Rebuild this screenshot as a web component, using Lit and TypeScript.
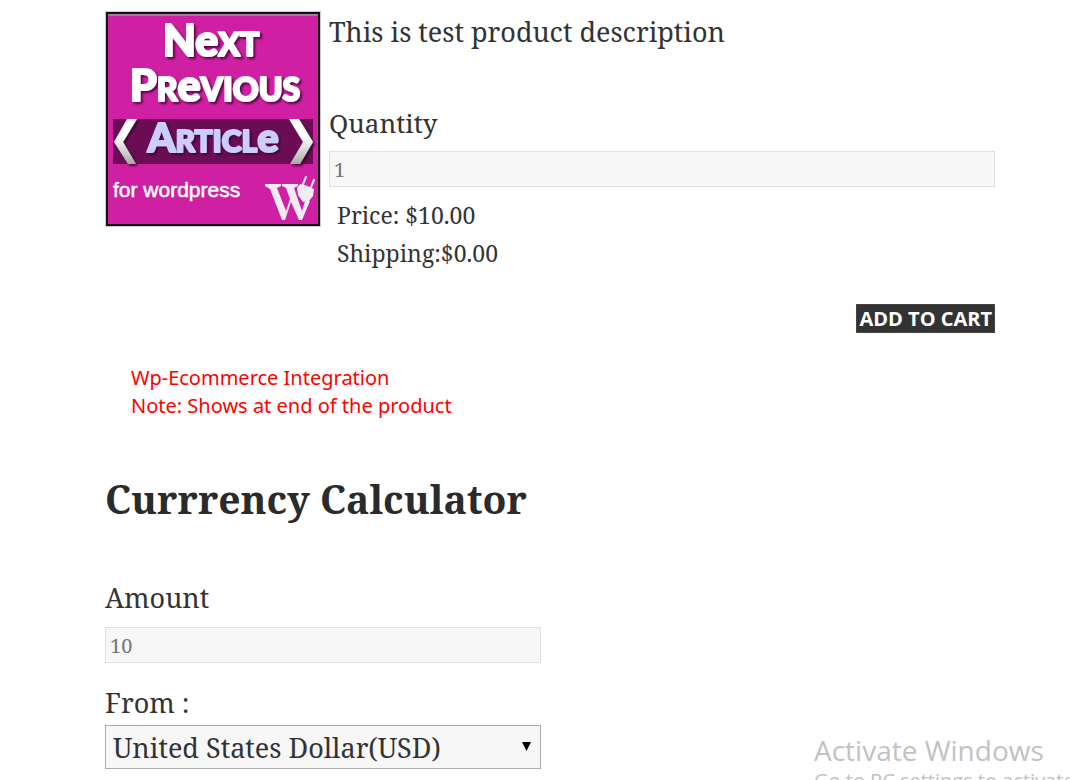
import { LitElement, html, css, svg } from "lit";
import { customElement, state } from "lit/decorators.js";

@customElement("product-badge")
class ProductBadge extends LitElement {
  static styles = css`
    :host { display: block; width: 216px; flex: none; }
    svg { display: block; width: 100%; }
    .word { font-family: Lato, sans-serif; font-weight: 900; stroke-width: 2; stroke-linejoin: round; }
    .tag { font-family: "Liberation Sans", sans-serif; font-size: 21px; fill: #fff; stroke: #fff; stroke-width: 0.5; }
  `;

  render() {
    const word = (x: number, y: number, size: number, fill: string, parts: string[]) => svg`
      <text class="word" x=${x} y=${y} font-size=${size} fill=${fill} stroke=${fill} filter="url(#shade)" text-anchor="middle">${parts.map(
        (part, i) => (i > 0 && part !== "e" ? svg`<tspan font-size=${Math.round(size * 0.75)}>${part}</tspan>` : svg`<tspan>${part}</tspan>`),
      )}</text>`;
    return html`
      <svg viewBox="0 0 216 216" role="img" aria-label="Next Previous Article for wordpress">
        <defs>
          <filter id="shade" x="-10%" y="-10%" width="125%" height="135%">
            <feDropShadow dx="2" dy="2" stdDeviation="1" flood-color="#3a0430" flood-opacity="0.8" />
          </filter>
          <linearGradient id="metal" x1="0" y1="0" x2="0" y2="1">
            <stop offset="0.4" stop-color="#fff" /><stop offset="1" stop-color="#aaa" />
          </linearGradient>
        </defs>
        <rect width="216" height="216" fill="#c8ccc8" />
        <rect x="1" y="1" width="214" height="214" fill="#171017" />
        <rect x="3" y="3" width="210" height="210" fill="#cf1fa3" />
        <rect x="3" y="3" width="210" height="2" fill="#a08098" />
        ${word(106, 45, 43, "#fff", ["N", "e", "XT"])}
        ${word(110, 90, 43, "#fff", ["P", "R", "e", "VIOUS"])}
        <rect x="8" y="108" width="200" height="45" fill="#6b0d55" />
        <path d="M22 108h10L18 131l13 22H23L9 131z" fill="url(#metal)" filter="url(#shade)" />
        <path d="M184 108h10l14 23-13 22h-10l13-22z" fill="url(#metal)" filter="url(#shade)" />
        ${word(108, 141, 40, "#ccccff", ["A", "RTICL", "e"])}
        <text class="tag" x="8" y="186">for wordpress</text>
        <g fill="#f1ecf2">
          <path d="M160 173H176V175L172 177L181 200L185 188L181 177L177 175V173H193V175L189 177L197 200L200 190H205L197 209H194L186 191L180 209H177L165 178L160 175Z" />
          <path d="M192 177L195 173L200 174L209 178L208 185L204 190L198 191L193 184Z" />
          <path d="M198 173L201 166M206 176L209 169" stroke="#f1ecf2" stroke-width="2" stroke-linecap="round" />
        </g>
      </svg>`;
  }
}

@customElement("app-root")
class AppRoot extends LitElement {
  static styles = css`
    :host { display: block; min-height: 100vh; background: #fff; color: #333; font-family: "Noto Serif", "Droid Serif", "DejaVu Serif Condensed", serif; font-size: 27px; line-height: 40px; }
    * { box-sizing: border-box; }
    main { padding: 12px 7% 8px 105px; }
    p, h1 { margin: 0; }
    .product { display: flex; gap: 8px; align-items: flex-start; }
    product-badge { margin-top: -1px; }
    .details { flex: 1; min-width: 0; display: flex; flex-direction: column; }
    .description { margin-bottom: 51px; }
    label { display: block; }
    .details label { font-size: 26px; }
    input { display: block; width: 100%; height: 36px; margin-top: 8px; padding: 0 4px; border: 1px solid #e0e0e0; background: #f7f7f7; color: #777; font-family: inherit; font-size: 20px; outline: none; border-radius: 0; }
    .prices { margin: 9px 8px 0; font-size: 23px; line-height: 38px; }
    .cart { align-self: flex-end; margin-top: 32px; padding: 0 2px; height: 29px; border: 1px solid #444; background: #333; color: #fff; font-family: "Open Sans", sans-serif; font-size: 20px; font-weight: 700; line-height: 26px; white-space: nowrap; }
    .note { margin: 31px 0 0 26px; color: #f00; font-family: "Noto Sans", sans-serif; font-size: 20px; line-height: 28px; }
    h1 { margin: 50px 0; color: #2b2b2b; font-size: 39px; line-height: 58px; }
    .calculator { width: 49%; }
    .field { margin-bottom: 20px; }
    .field input { margin-top: 9px; }
    .picker { position: relative; margin-top: 2px; }
    select { display: block; appearance: none; width: 100%; height: 44px; padding: 0 32px 0 7px; border: 1px solid #aaa; border-radius: 0; background: #f7f7f7; color: #333; font-family: inherit; font-size: 27px; }
    .arrow { position: absolute; right: 10px; top: 17px; width: 9px; height: 9px; pointer-events: none; }
    .watermark { position: absolute; top: 731px; left: 814px; right: 0; height: 49px; overflow: hidden; white-space: nowrap; color: #c2c2c2; font-family: "Open Sans", sans-serif; font-size: 28px; line-height: 38px; pointer-events: none; }
    .watermark small { display: block; font-size: 20px; line-height: 24px; }
  `;

  @state() quantity = "1";
  @state() amount = "10";

  render() {
    return html`
      <main>
        <section class="product">
          <product-badge></product-badge>
          <div class="details">
            <p class="description">This is test product description</p>
            <label for="quantity">Quantity</label>
            <input id="quantity" type="text" .value=${this.quantity} />
            <div class="prices">
              <p>Price: $10.00</p>
              <p>Shipping:$0.00</p>
            </div>
            <button class="cart" type="button">ADD TO CART</button>
          </div>
        </section>
        <div class="note">
          <p>Wp-Ecommerce Integration</p>
          <p>Note: Shows at end of the product</p>
        </div>
        <h1>Currrency Calculator</h1>
        <form class="calculator">
          <div class="field">
            <label for="amount">Amount</label>
            <input id="amount" type="text" .value=${this.amount} />
          </div>
          <label for="from">From :</label>
          <div class="picker">
            <select id="from"><option>United States Dollar(USD)</option></select>
            <svg class="arrow" viewBox="0 0 9 9" aria-hidden="true"><path d="M0 0h9L4.500 9z" /></svg>
          </div>
        </form>
      </main>
      <div class="watermark">Activate Windows<small>Go to PC settings to activate Windows.</small></div>`;
  }
}
